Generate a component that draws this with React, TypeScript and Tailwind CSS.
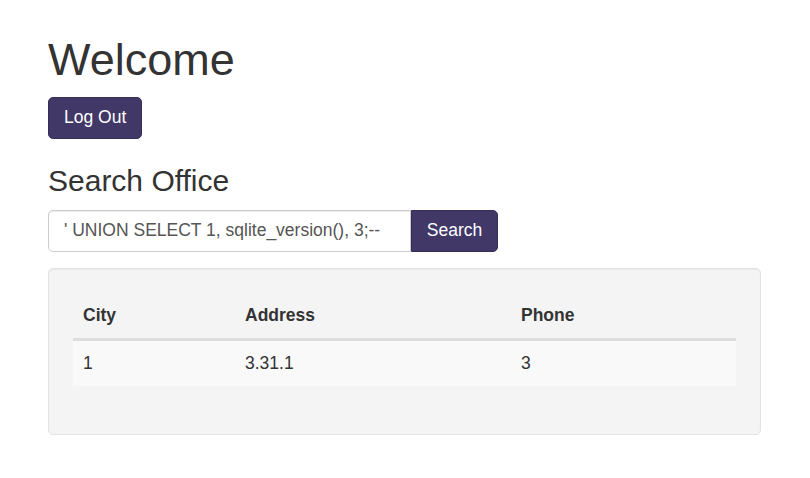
import React, { useState } from 'react';

const rows = [{ city: '1', address: '3.31.1', phone: '3' }];

export default function App() {
  const [query, setQuery] = useState("' UNION SELECT 1, sqlite_version(), 3;--");

  return (
    <div
      className="min-h-screen bg-white px-[48px] pt-[35px] text-[#333] text-[17.5px] leading-[1.43]"
      style={{ fontFamily: '"Liberation Sans", Arial, sans-serif' }}
    >
      <h1 className="text-[45px] leading-[1.1] font-normal">Welcome</h1>
      <button
        type="button"
        className="mt-[12.5px] h-[42px] px-[15px] rounded-[5px] bg-[#413868] text-white border border-[#362e57]"
      >
        Log Out
      </button>

      <h3 className="mt-[25px] text-[30px] leading-[1.1] font-normal">Search Office</h3>
      <form className="mt-[12.5px] flex" onSubmit={(e) => e.preventDefault()}>
        <input
          type="text"
          value={query}
          onChange={(e) => setQuery(e.target.value)}
          className="w-[363px] h-[42px] px-[15px] border border-[#ccc] rounded-l-[5px] text-[#555] outline-none shadow-[inset_0_1px_1px_rgba(0,0,0,0.075)]"
        />
        <button
          type="submit"
          className="h-[42px] w-[87px] rounded-r-[5px] bg-[#413868] text-white border border-[#362e57]"
        >
          Search
        </button>
      </form>

      <div className="mt-[16px] w-[713px] bg-[#f4f4f4] border border-[#e3e3e3] rounded-[5px] p-[24px] shadow-[inset_0_1px_1px_rgba(0,0,0,0.05)]">
        <table className="w-full mb-[24px] border-collapse">
          <thead>
            <tr className="border-b-[3px] border-[#ddd]">
              <th className="w-[162px] text-left font-bold px-[10px] py-[10px]">City</th>
              <th className="w-[276px] text-left font-bold px-[10px] py-[10px]">Address</th>
              <th className="text-left font-bold px-[10px] py-[10px]">Phone</th>
            </tr>
          </thead>
          <tbody>
            {rows.map((r) => (
              <tr key={r.city} className="bg-[#f9f9f9]">
                <td className="px-[10px] py-[10px]">{r.city}</td>
                <td className="px-[10px] py-[10px]">{r.address}</td>
                <td className="px-[10px] py-[10px]">{r.phone}</td>
              </tr>
            ))}
          </tbody>
        </table>
      </div>
    </div>
  );
}
